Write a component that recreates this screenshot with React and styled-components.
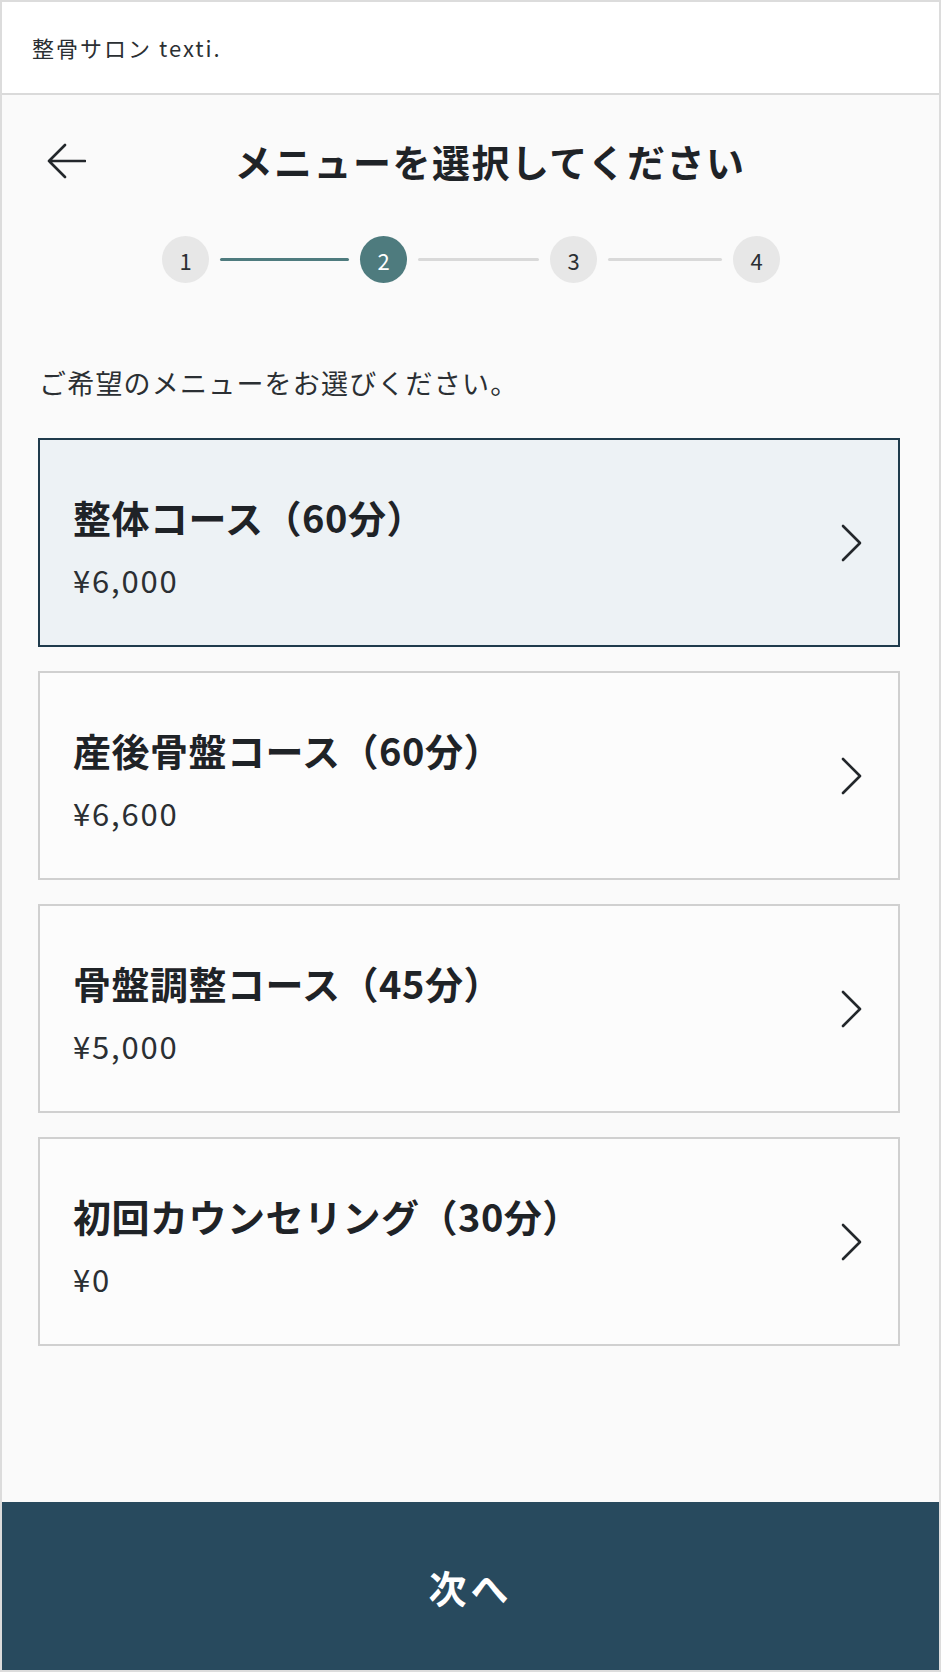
import React from 'react'
import styled, { createGlobalStyle } from 'styled-components'

const GlobalStyle = createGlobalStyle`
  html, body {
    margin: 0;
    padding: 0;
    height: 100%;
  }
  body {
    font-family: "Noto Sans CJK JP", "Noto Sans", sans-serif;
    background: #fafafa;
    color: #212529;
  }
  * {
    box-sizing: border-box;
  }
`

const menus = [
  { name: '整体コース（60分）', price: '¥6,000', selected: true },
  { name: '産後骨盤コース（60分）', price: '¥6,600' },
  { name: '骨盤調整コース（45分）', price: '¥5,000' },
  { name: '初回カウンセリング（30分）', price: '¥0' },
]

// connector widths between the step dots
const lineWidths = [129, 121, 114]

const App = () => {
  return (
    <>
      <GlobalStyle />
      <Frame>
        <Header>整骨サロン texti.</Header>
        <Main>
          <TitleRow>
            <BackButton aria-label='戻る'>
              <svg width='40' height='36' viewBox='0 0 40 36' fill='none'>
                <path
                  d='M39 18H3M19 2L3 18l16 16'
                  stroke='#23272b'
                  strokeWidth='2.6'
                  strokeLinecap='round'
                  strokeLinejoin='round'
                />
              </svg>
            </BackButton>
            <Title>メニューを選択してください</Title>
          </TitleRow>

          <Steps>
            {[1, 2, 3, 4].map((n) => (
              <React.Fragment key={n}>
                {n > 1 && <StepLine $done={n <= 2} $width={lineWidths[n - 2]} />}
                <StepDot $active={n === 2}>{n}</StepDot>
              </React.Fragment>
            ))}
          </Steps>

          <Lead>ご希望のメニューをお選びください。</Lead>

          <MenuList>
            {menus.map((m) => (
              <MenuCard key={m.name} $selected={m.selected}>
                <MenuText>
                  <MenuName>{m.name}</MenuName>
                  <MenuPrice>{m.price}</MenuPrice>
                </MenuText>
                <svg width='22' height='40' viewBox='0 0 22 40' fill='none'>
                  <path
                    d='M3 3l17 17L3 37'
                    stroke='#23272b'
                    strokeWidth='2.6'
                    strokeLinecap='round'
                    strokeLinejoin='round'
                  />
                </svg>
              </MenuCard>
            ))}
          </MenuList>
        </Main>
        <NextButton>次へ</NextButton>
      </Frame>
    </>
  )
}

const Frame = styled.div`
  height: 100vh;
  min-height: 1672px;
  display: flex;
  flex-direction: column;
  border: 2px solid #dcdcdc;
  background: #fafafa;
`

const Header = styled.header`
  height: 93px;
  flex-shrink: 0;
  display: flex;
  align-items: center;
  padding: 0 0 2px 30px;
  background: #fff;
  border-bottom: 2px solid #dadada;
  font-size: 22px;
  letter-spacing: 2px;
  color: #2b2f33;
`

const Main = styled.main`
  flex: 1;
  padding: 41px 39px 0 36px;
`

const TitleRow = styled.div`
  display: flex;
  align-items: center;
  height: 50px;
  padding: 0 6px 0 8px;
`

const BackButton = styled.button`
  width: 40px;
  height: 36px;
  padding: 0;
  border: none;
  background: none;
  display: flex;
  cursor: pointer;
`

const Title = styled.h1`
  flex: 1;
  margin: 0;
  text-align: center;
  font-size: 38px;
  line-height: 50px;
  font-weight: 700;
  letter-spacing: 1.5px;
  color: #1f2327;
`

const Steps = styled.div`
  display: flex;
  align-items: center;
  justify-content: center;
  margin-top: 50px;
  margin-left: 4px;
`

const StepDot = styled.div`
  width: 47px;
  height: 47px;
  border-radius: 50%;
  display: flex;
  align-items: center;
  justify-content: center;
  font-size: 22px;
  background: ${(p) => (p.$active ? '#4e7b7e' : '#e7e7e7')};
  color: ${(p) => (p.$active ? '#fff' : '#2b2f33')};
`

const StepLine = styled.div`
  width: ${(p) => p.$width}px;
  height: 3px;
  margin: 0 11px;
  border-radius: 2px;
  background: ${(p) => (p.$done ? '#4e7b7e' : '#d9d9d9')};
`

const Lead = styled.p`
  margin: 82px 0 0 1px;
  font-size: 27px;
  line-height: 36px;
  letter-spacing: 1.2px;
  color: #2b2f33;
`

const MenuList = styled.div`
  display: flex;
  flex-direction: column;
  gap: 24px;
  margin-top: 37px;
`

const MenuCard = styled.div`
  height: 209px;
  display: flex;
  align-items: center;
  justify-content: space-between;
  padding: 0 36px 0 33px;
  border: 2px solid ${(p) => (p.$selected ? '#1f3b4c' : '#d0d0d0')};
  background: ${(p) => (p.$selected ? '#edf2f5' : '#fcfcfc')};
  cursor: pointer;
`

const MenuText = styled.div`
  display: flex;
  flex-direction: column;
  gap: 18px;
  margin-top: 7px;
`

const MenuName = styled.div`
  font-size: 38px;
  line-height: 50px;
  font-weight: 700;
  letter-spacing: 0.5px;
  color: #1f2327;
`

const MenuPrice = styled.div`
  font-size: 31px;
  line-height: 40px;
  letter-spacing: 1.8px;
  color: #2b2f33;
`

const NextButton = styled.button`
  height: 168px;
  flex-shrink: 0;
  border: none;
  background: #284a5e;
  color: #fff;
  font-family: inherit;
  font-size: 38px;
  font-weight: 700;
  letter-spacing: 4px;
  cursor: pointer;
`

export default App
